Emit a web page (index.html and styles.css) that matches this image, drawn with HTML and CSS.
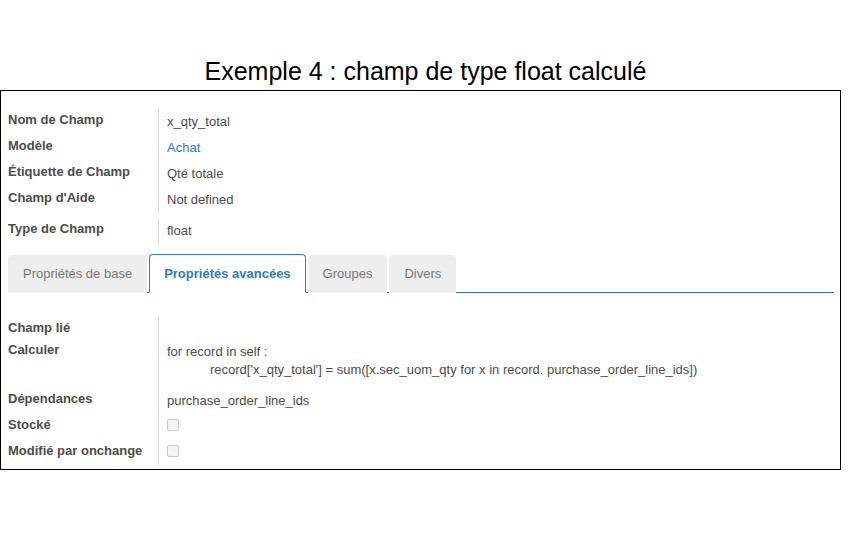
FILE: index.html
```html
<!DOCTYPE html>
<html lang="fr">
<head>
<meta charset="utf-8">
<link rel="stylesheet" href="styles.css">
</head>
<body>
<h1 class="title">Exemple 4 : champ de type float calculé</h1>
<div class="sheet">
  <div class="group group-top">
    <div class="row"><div class="label">Nom de Champ</div><div class="value">x_qty_total</div></div>
    <div class="row"><div class="label">Modèle</div><div class="value"><a class="link">Achat</a></div></div>
    <div class="row"><div class="label">Étiquette de Champ</div><div class="value">Qté totale</div></div>
    <div class="row"><div class="label">Champ d'Aide</div><div class="value">Not defined</div></div>
    <div class="row row-spaced"><div class="label">Type de Champ</div><div class="value">float</div></div>
  </div>
  <ul class="tabs">
    <li class="tab">Propriétés de base</li>
    <li class="tab active">Propriétés avancées</li>
    <li class="tab">Groupes</li>
    <li class="tab">Divers</li>
  </ul>
  <div class="group group-bottom">
    <div class="row row-short"><div class="label">Champ lié</div><div class="value"></div></div>
    <div class="row row-code"><div class="label">Calculer</div><div class="value">
      <div>for record in self :</div>
      <div class="indent">record['x_qty_total'] = sum([x.sec_uom_qty for x in record. purchase_order_line_ids])</div>
    </div></div>
    <div class="row"><div class="label">Dépendances</div><div class="value">purchase_order_line_ids</div></div>
    <div class="row"><div class="label">Stocké</div><div class="value"><span class="check"></span></div></div>
    <div class="row"><div class="label">Modifié par onchange</div><div class="value"><span class="check"></span></div></div>
  </div>
</div>
</body>
</html>
```

FILE: styles.css
```css
html, body {
  margin: 0;
  padding: 0;
  background: #fff;
}
body {
  font-family: "Liberation Sans", Arial, sans-serif;
  font-size: 13px;
  color: #4c4c4c;
}
.title {
  margin: 0;
  padding-top: 56px;
  height: 30px;
  line-height: 30px;
  font-size: 25px;
  font-weight: normal;
  color: #000;
  text-align: center;
  margin-bottom: 4px;
}
.sheet {
  width: 841px;
  box-sizing: border-box;
  border: 1px solid #000;
  padding: 0 6px 3px 7px;
}
.group {
  display: flex;
  flex-direction: column;
}
.group-top {
  padding-top: 18px;
  padding-bottom: 1px;
}
.group-bottom {
  padding-top: 24px;
}
.row {
  display: flex;
  height: 26px;
  line-height: 18px;
}
.row-spaced {
  margin-top: 5px;
}
.row-short {
  height: 22px;
}
.row-code {
  height: 49px;
}
.label {
  width: 150px;
  flex: none;
  font-weight: bold;
  padding-top: 2px;
  box-sizing: border-box;
}
.value {
  flex: 1;
  border-left: 1px solid #ddd;
  padding-left: 8px;
  padding-top: 4px;
  box-sizing: border-box;
}
.link {
  color: #337ab7;
  text-decoration: none;
}
.indent {
  padding-left: 43px;
}
.check {
  display: inline-block;
  width: 10px;
  height: 10px;
  border: 1px solid #c8c8c8;
  border-radius: 2px;
  background: #f4f4f4;
  margin-top: 1px;
  vertical-align: top;
}
.tabs {
  list-style: none;
  margin: 9px 0 0 0;
  padding: 0;
  display: flex;
  border-bottom: 1px solid #337ab7;
}
.tab {
  padding: 10px 14px;
  line-height: 16px;
  margin-right: 2px;
  margin-bottom: -1px;
  border: 1px solid transparent;
  border-radius: 4px 4px 0 0;
  background: #eeeeee;
  color: #777;
  margin-top: 1px;
}
.tab.active {
  background: #fff;
  color: #337ab7;
  font-weight: bold;
  border-color: #337ab7;
  border-bottom-color: #fff;
  margin-top: 0;
  padding-top: 11px;
}
```
